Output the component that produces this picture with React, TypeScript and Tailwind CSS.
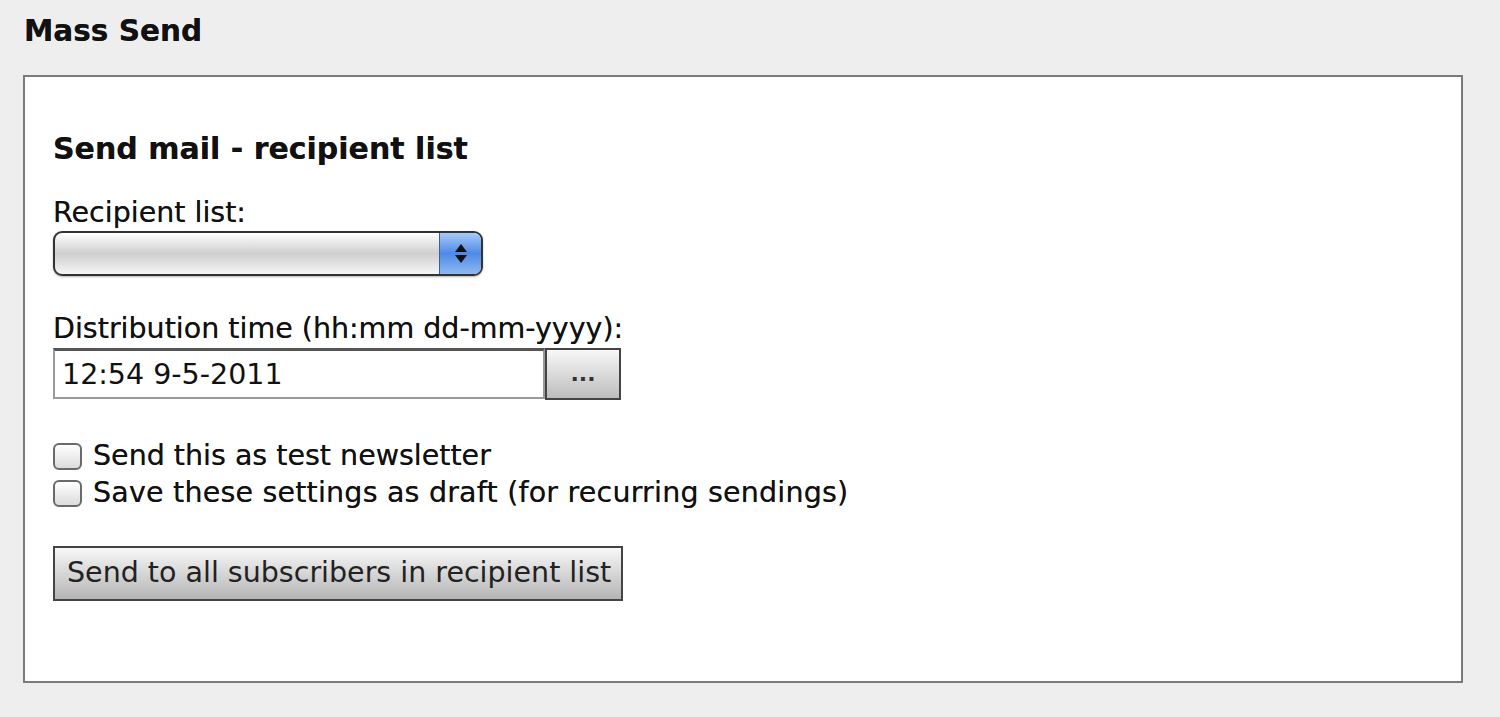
import React, { useState } from 'react';

export default function App() {
  const [isTest, setIsTest] = useState(false);
  const [isDraft, setIsDraft] = useState(false);
  const [time, setTime] = useState('12:54 9-5-2011');

  return (
    <div className="min-h-[717px] w-[1500px] bg-[#eeeeee] pt-[14px] pl-[23px] pr-[37px] font-['DejaVu_Sans',Verdana,sans-serif] text-[#111] [text-shadow:0_0_0.6px_rgba(0,0,0,0.7)]">
      <h1 className="text-[29.5px] font-bold leading-[34px] pl-px">Mass Send</h1>

      <div className="mt-[27px] h-[608px] border-2 border-[#7a7a7a] bg-white pl-[28px] pt-[55px]">
        <h2 className="text-[30px] font-bold leading-[34px]">Send mail - recipient list</h2>

        <div className="mt-[31px] text-[28.5px] leading-[32px]">Recipient list:</div>
        <div className="relative mt-[2px] flex h-[45px] w-[430px] overflow-hidden rounded-[9px] border-2 border-[#333] bg-gradient-to-b from-[#ffffff] via-[#cfcfcf] to-[#f6f6f6] shadow-[0_1px_2px_rgba(0,0,0,0.3)]">
          <div className="flex-1" />
          <div className="flex w-[42px] flex-col items-center justify-center gap-[3px] border-l border-[#3a5f9e] bg-gradient-to-b from-[#a9c8f5] via-[#4d8ae6] to-[#8fb8f2]">
            <svg width="12" height="8" viewBox="0 0 12 8">
              <path d="M6 0 L12 8 L0 8 Z" fill="#111" />
            </svg>
            <svg width="12" height="8" viewBox="0 0 12 8">
              <path d="M0 0 L12 0 L6 8 Z" fill="#111" />
            </svg>
          </div>
        </div>

        <div className="mt-[37px] text-[28.5px] leading-[32px]">Distribution time (hh:mm dd-mm-yyyy):</div>
        <div className="mt-[3px] flex">
          <input
            className="h-[51px] w-[492px] border-2 border-t-[3px] border-[#9a9a9a] border-t-[#555] bg-white px-[7px] text-[28.5px] text-[#111] outline-none"
            value={time}
            onChange={(e) => setTime(e.target.value)}
          />
          <button
            type="button"
            className="h-[52px] w-[76px] border-2 border-[#444] bg-gradient-to-b from-[#f8f8f8] to-[#bdbdbd] text-[22px] font-bold leading-none text-[#333]"
          >
            ...
          </button>
        </div>

        <div className="mt-[40px] flex flex-col gap-[5px] text-[28.5px] leading-[32px]">
          <label className="flex items-center gap-[11px]">
            <input
              type="checkbox"
              checked={isTest}
              onChange={(e) => setIsTest(e.target.checked)}
              className="h-[27px] w-[29px] appearance-none rounded-[6px] border-2 border-[#6a6a6a] bg-gradient-to-b from-white to-[#dcdcdc]"
            />
            Send this as test newsletter
          </label>
          <label className="flex items-center gap-[11px]">
            <input
              type="checkbox"
              checked={isDraft}
              onChange={(e) => setIsDraft(e.target.checked)}
              className="h-[27px] w-[29px] appearance-none rounded-[6px] border-2 border-[#6a6a6a] bg-gradient-to-b from-white to-[#dcdcdc]"
            />
            <span className="tracking-[0.2px]">Save these settings as draft (for recurring sendings)</span>
          </label>
        </div>

        <button
          type="button"
          className="mt-[37px] h-[55px] w-[570px] border-2 border-[#444] bg-gradient-to-b from-[#f8f8f8] to-[#b5b5b5] px-[12px] text-left text-[28.5px] whitespace-nowrap text-[#222]"
        >
          Send to all subscribers in recipient list
        </button>
      </div>
    </div>
  );
}
